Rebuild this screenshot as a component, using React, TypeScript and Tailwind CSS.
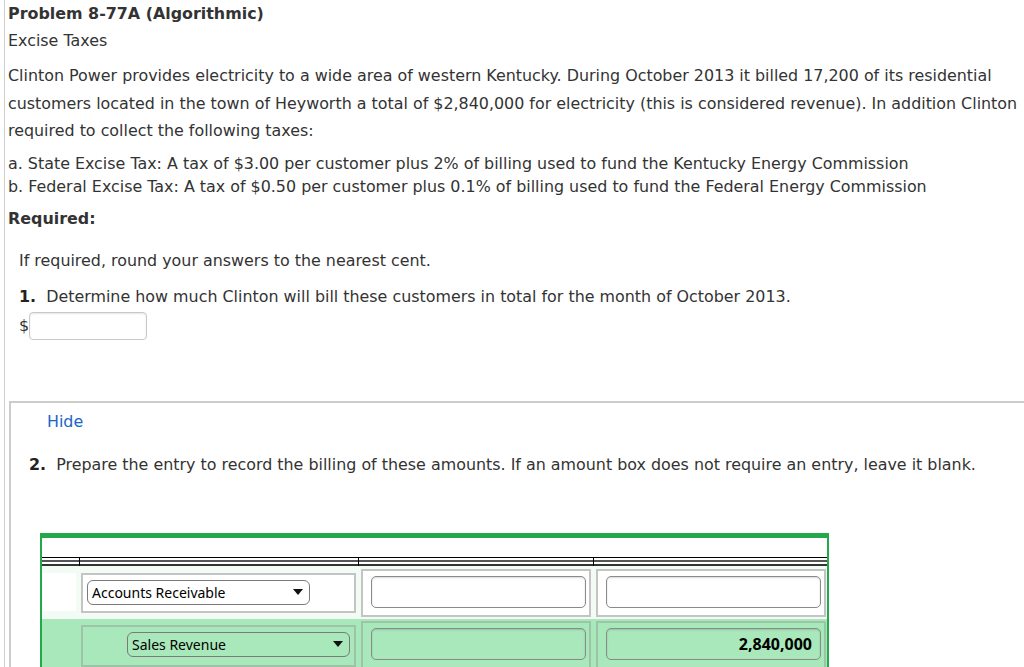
import React from 'react';

const font = { fontFamily: '"DejaVu Sans", Verdana, sans-serif' };

const SelectBox: React.FC<{ label: string; green?: boolean; className?: string }> = ({ label, green, className }) => (
  <div
    className={`flex items-center justify-between h-[25px] rounded-[6px] border border-[#7a7a7a] pl-[4px] pr-[6px] ${
      green ? 'bg-[#a8e8bb]' : 'bg-white'
    } ${className ?? ''}`}
  >
    <span className="text-[14px] text-black" style={{ fontFamily: '"Noto Sans", "Liberation Sans", sans-serif' }}>
      {label}
    </span>
    <svg width="10" height="6" viewBox="0 0 10 6">
      <path d="M0 0 L10 0 L5 6 Z" fill="#111" />
    </svg>
  </div>
);

const AmountInput: React.FC<{ value?: string; green?: boolean }> = ({ value, green }) => (
  <div
    className={`h-[32px] rounded-[5px] border border-[#8a8a8a] shadow-[inset_0_1px_2px_rgba(0,0,0,0.15)] flex items-center justify-end pr-[8px] ${
      green ? 'bg-[#a8e8bb]' : 'bg-white'
    }`}
  >
    {value && (
      <span className="text-[16px] font-bold text-black" style={{ fontFamily: '"Noto Sans", "Liberation Sans", sans-serif' }}>
        {value}
      </span>
    )}
  </div>
);

const HeaderLines: React.FC<{ divider?: boolean }> = ({ divider }) => (
  <div className={divider ? 'border-l border-black' : ''}>
    <div className="h-px bg-black" />
    <div className="h-[2px] bg-white" />
    <div className="h-[2px] bg-[#555]" />
    <div className="h-[2px] bg-white" />
    <div className="h-[2px] bg-[#333]" />
  </div>
);

export default function App() {
  return (
    <div className="w-[1024px] h-[667px] overflow-hidden bg-white text-[#333] text-[15.9px]" style={font}>
      <div className="ml-[4px] border-l border-[#cfcfcf] h-full pl-[3px]">
        <div className="pt-[3px] leading-[22px] font-bold text-[#333]">Problem 8-77A (Algorithmic)</div>
        <div className="mt-[5px] leading-[22px]">Excise Taxes</div>
        <p className="mt-[10px] leading-[27.5px] whitespace-nowrap">
          Clinton Power provides electricity to a wide area of western Kentucky. During October 2013 it billed 17,200 of its residential
          <br />
          customers located in the town of Heyworth a total of $2,840,000 for electricity (this is considered revenue). In addition Clinton
          <br />
          required to collect the following taxes:
        </p>
        <div className="mt-[7px] leading-[23px] whitespace-nowrap">
          <div>a. State Excise Tax: A tax of $3.00 per customer plus 2% of billing used to fund the Kentucky Energy Commission</div>
          <div>b. Federal Excise Tax: A tax of $0.50 per customer plus 0.1% of billing used to fund the Federal Energy Commission</div>
        </div>
        <div className="mt-[10px] leading-[22px] font-bold">Required:</div>

        <div className="pl-[11px]">
          <div className="mt-[20px] leading-[22px]">If required, round your answers to the nearest cent.</div>
          <div className="mt-[14px] leading-[22px]">
            <span className="font-bold text-[#222]">1.</span>&nbsp; Determine how much Clinton will bill these customers in total for the month of October 2013.
          </div>
          <div className="mt-[4px] flex items-center">
            <span>$</span>
            <div className="w-[118px] h-[28px] rounded-[4px] border border-[#c8c8c8] shadow-[inset_0_1px_2px_rgba(0,0,0,0.1)] bg-white" />
          </div>
        </div>

        <div className="mt-[61px] ml-[1px] border-t-2 border-l-2 border-[#cccccc] pl-[36px]">
          <div className="pt-[8px] leading-[22px] text-[#1a66c4]">Hide</div>
          <div className="-ml-[18px] mt-[21px] leading-[22px] whitespace-nowrap">
            <span className="font-bold text-[#222]">2.</span>&nbsp; Prepare the entry to record the billing of these amounts. If an amount box does not require an entry, leave it blank.
          </div>

          <div className="-ml-[7px] mt-[57px] w-[789px] border-t-[5px] border-x-2 border-[#25a84a]">
            <div className="h-[19px] bg-white" />
            <div className="grid grid-cols-[37px_279px_235px_234px]">
              <HeaderLines />
              <HeaderLines divider />
              <HeaderLines divider />
              <HeaderLines divider />
            </div>
            <div className="grid grid-cols-[37px_279px_235px_234px] bg-[#f2fbf4] h-[53px]">
              <div className="pl-[1px] pt-[7px]">
                <div className="w-[33px] h-[38px] bg-white" />
              </div>
              <div className="pl-[2px] pt-[7px]">
                <div className="w-[275px] h-[40px] border-2 border-[#c4c4c4] bg-white pl-[4px] pt-[5px]">
                  <SelectBox label="Accounts Receivable" className="w-[223px]" />
                </div>
              </div>
              <div className="pl-[3px] pt-[3px]">
                <div className="w-[230px] h-[48px] border-2 border-[#c4c4c4] bg-white pl-[8px] pr-[3px] pt-[5px]">
                  <AmountInput />
                </div>
              </div>
              <div className="pl-[3px] pt-[3px]">
                <div className="w-[230px] h-[48px] border-2 border-[#c4c4c4] bg-white pl-[8px] pr-[3px] pt-[5px]">
                  <AmountInput />
                </div>
              </div>
            </div>
            <div className="grid grid-cols-[37px_279px_235px_234px] bg-[#a8e8bb] h-[60px]">
              <div />
              <div className="pl-[2px] pt-[6px]">
                <div className="w-[275px] h-[42px] border-2 border-[#9cc4a6] pl-[44px] pt-[5px]">
                  <SelectBox label="Sales Revenue" green className="w-[223px]" />
                </div>
              </div>
              <div className="pl-[3px] pt-[2px]">
                <div className="w-[230px] h-[50px] border-2 border-[#9cc4a6] pl-[8px] pr-[3px] pt-[5px]">
                  <AmountInput green />
                </div>
              </div>
              <div className="pl-[3px] pt-[2px]">
                <div className="w-[230px] h-[50px] border-2 border-[#9cc4a6] pl-[8px] pr-[3px] pt-[5px]">
                  <AmountInput green value="2,840,000" />
                </div>
              </div>
            </div>
          </div>
        </div>
      </div>
    </div>
  );
}
